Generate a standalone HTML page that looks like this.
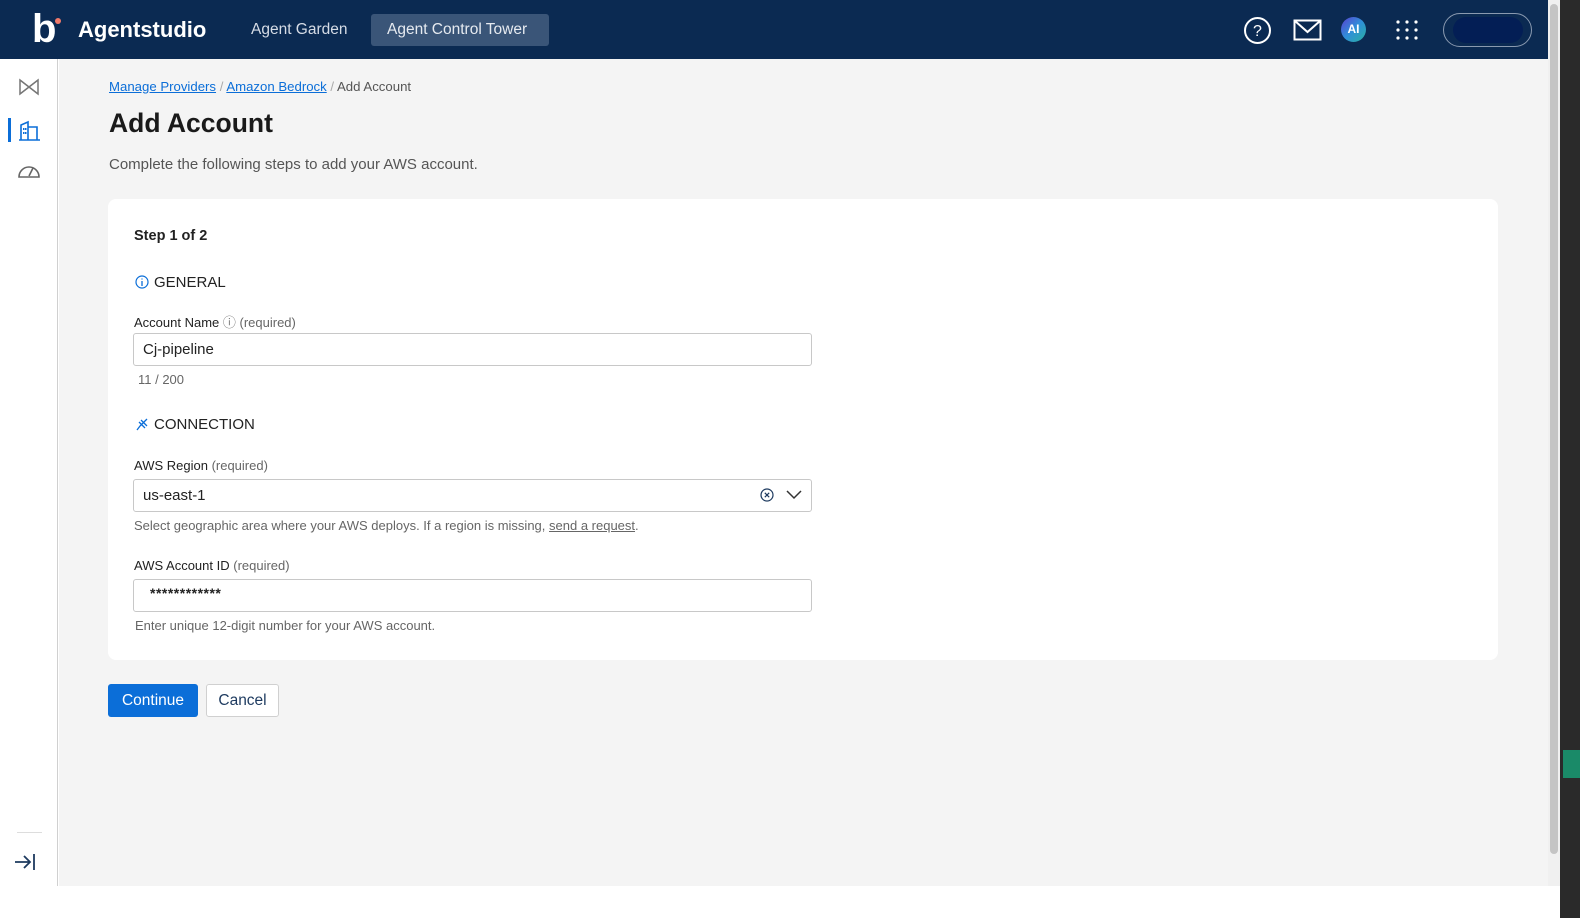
<!DOCTYPE html>
<html><head><meta charset="utf-8"><style>
*{box-sizing:border-box;margin:0;padding:0}
body{width:1580px;height:918px;overflow:hidden;background:#fff;font-family:"Liberation Sans",sans-serif;position:relative}
.hdr{position:absolute;left:0;top:0;width:1548px;height:59px;background:#0b2a52}
.side{position:absolute;left:0;top:59px;width:58px;height:827px;background:#fff;border-right:1px solid #d0d0d0}
.main{position:absolute;left:59px;top:59px;width:1489px;height:827px;background:#f4f4f4}
.sb{position:absolute;left:1548px;top:0;width:12px;height:886px;background:#f0f0f0}
.sb div{position:absolute;left:2px;top:4px;width:8px;height:850px;background:#c4c4c4;border-radius:4px}
.dark{position:absolute;left:1560px;top:0;width:20px;height:918px;background:#2a2a2a}
.t{position:absolute;white-space:nowrap}
.card{position:absolute;left:108px;top:199px;width:1390px;height:461px;background:#fff;border-radius:8px}
.inp{position:absolute;left:133px;width:679px;height:33px;border:1px solid #c8c8c8;border-radius:3px;background:#fff}
.lbl{font-size:13px;color:#222}
.req{color:#666}
.help{font-size:13px;color:#666}
</style></head><body>
<div class="hdr">
 <div class="t" style="left:32px;top:9px;color:#fff;font-size:40px;font-weight:bold;line-height:40px">b</div>
 <div style="position:absolute;left:55px;top:18px;width:6px;height:6px;border-radius:50%;background:#f07a6a"></div>
 <div class="t" style="left:78px;top:17px;color:#fff;font-size:22px;font-weight:bold">Agentstudio</div>
 <div class="t" style="left:251px;top:21px;color:#d6dce6;font-size:15.5px">Agent Garden</div>
 <div style="position:absolute;left:371px;top:14px;width:178px;height:32px;background:#3a5578;border-radius:3px"></div>
 <div class="t" style="left:387px;top:21px;color:#e6eaf0;font-size:15.5px">Agent Control Tower</div>
 <svg style="position:absolute;left:1243px;top:16px" width="29" height="29"><circle cx="14.5" cy="14.5" r="12.5" fill="none" stroke="#fff" stroke-width="2"/><text x="14.5" y="20" fill="#fff" font-size="16" text-anchor="middle" font-family="Liberation Sans">?</text></svg>
 <svg style="position:absolute;left:1293px;top:19px" width="29" height="23"><rect x="1.5" y="1.5" width="26" height="19" fill="none" stroke="#fff" stroke-width="2"/><path d="M2 2 L14.5 13 L27 2" fill="none" stroke="#fff" stroke-width="2"/></svg>
 <div style="position:absolute;left:1341px;top:17px;width:25px;height:25px;border-radius:50%;background:linear-gradient(135deg,#5a3fd0,#2f8fd8,#2ab0a0);color:#fff;font-size:12px;font-weight:bold;text-align:center;line-height:25px">AI</div>
 <svg style="position:absolute;left:1395px;top:19px" width="24" height="22"><g fill="#fff"><circle cx="3" cy="3" r="1.6"/><circle cx="12" cy="3" r="1.6"/><circle cx="21" cy="3" r="1.6"/><circle cx="3" cy="11" r="1.6"/><circle cx="12" cy="11" r="1.6"/><circle cx="21" cy="11" r="1.6"/><circle cx="3" cy="19" r="1.6"/><circle cx="12" cy="19" r="1.6"/><circle cx="21" cy="19" r="1.6"/></g></svg>
 <div style="position:absolute;left:1443px;top:13px;width:89px;height:34px;border:1px solid #8a9ab0;border-radius:17px"><div style="position:absolute;left:9px;top:3px;width:70px;height:26px;background:#031e55;border-radius:13px"></div></div>
</div>
<div class="side">
 <svg style="position:absolute;left:18px;top:19px" width="22" height="18"><path d="M2 2 L2 16 L11 9 Z M20 2 L20 16 L11 9 Z" fill="none" stroke="#777" stroke-width="1.5"/><path d="M2 2 L20 16 M20 2 L2 16" stroke="#777" stroke-width="1.3"/></svg>
 <div style="position:absolute;left:8px;top:59px;width:3px;height:24px;background:#0b6ed8"></div>
 <svg style="position:absolute;left:18px;top:60px" width="24" height="22"><path d="M3 21 V6 L10 3 V21 M10 8 H19 V21 M1 21 H22" fill="none" stroke="#0b6ed8" stroke-width="1.6"/><g fill="#0b6ed8"><rect x="5" y="9" width="1.5" height="2"/><rect x="7" y="9" width="1.5" height="2"/><rect x="5" y="13" width="1.5" height="2"/><rect x="7" y="13" width="1.5" height="2"/></g></svg>
 <svg style="position:absolute;left:17px;top:103px" width="24" height="16"><path d="M2 15 A10 10 0 0 1 22 15 Z" fill="none" stroke="#666" stroke-width="1.6"/><path d="M12 14 L16 6" stroke="#666" stroke-width="1.6"/></svg>
 <div style="position:absolute;left:17px;top:773px;width:25px;height:1px;background:#ddd"></div>
 <svg style="position:absolute;left:14px;top:793px" width="22" height="20"><path d="M1 10 H16 M10 4 L16 10 L10 16 M20 2 V18" fill="none" stroke="#1d3a5f" stroke-width="1.8"/></svg>
</div>
<div class="main"></div>
<div class="sb"><div></div></div>
<div class="dark"><div style="position:absolute;left:3px;top:750px;width:17px;height:28px;background:#1a8a68"></div></div>

<div class="t" style="left:109px;top:79px;font-size:13.2px;color:#555"><span style="color:#0b6ed8;text-decoration:underline">Manage Providers</span> <span style="color:#aaa">/</span> <span style="color:#0b6ed8;text-decoration:underline">Amazon Bedrock</span> <span style="color:#aaa">/</span> Add Account</div>
<div class="t" style="left:109px;top:108px;font-size:26.5px;font-weight:bold;color:#1a1a1a">Add Account</div>
<div class="t" style="left:109px;top:156px;font-size:15px;color:#555">Complete the following steps to add your AWS account.</div>

<div class="card"></div>
<div class="t" style="left:134px;top:228px;font-size:14.5px;font-weight:bold;color:#222">Step 1 of 2</div>
<svg style="position:absolute;left:135px;top:275px" width="14" height="14"><circle cx="7" cy="7" r="6" fill="none" stroke="#0b6ed8" stroke-width="1.2"/><path d="M7 6 V11 M7 3.5 V4.5" stroke="#0b6ed8" stroke-width="1.3"/></svg>
<div class="t" style="left:154px;top:274px;font-size:15px;color:#222">GENERAL</div>
<div class="t lbl" style="left:134px;top:312px">Account Name <span style="color:#777">ⓘ</span> <span class="req">(required)</span></div>
<div class="inp" style="top:333px"></div>
<div class="t" style="left:143px;top:341px;font-size:15px;color:#222">Cj-pipeline</div>
<div class="t help" style="left:138px;top:372px">11 / 200</div>
<svg style="position:absolute;left:134px;top:416px" width="15" height="16"><path d="M3 14 L6 10 M6 10 L9 7 L13 3 M5 6 L11 12 M7 4 L13 10" fill="none" stroke="#0b6ed8" stroke-width="1.3"/></svg>
<div class="t" style="left:154px;top:416px;font-size:15px;color:#222">CONNECTION</div>
<div class="t lbl" style="left:134px;top:458px">AWS Region <span class="req">(required)</span></div>
<div class="inp" style="top:479px"></div>
<div class="t" style="left:143px;top:487px;font-size:15px;color:#222">us-east-1</div>
<svg style="position:absolute;left:760px;top:488px" width="14" height="14"><circle cx="7" cy="7" r="6" fill="none" stroke="#1d3a5f" stroke-width="1.2"/><path d="M4.8 4.8 L9.2 9.2 M9.2 4.8 L4.8 9.2" stroke="#1d3a5f" stroke-width="1.2"/></svg>
<svg style="position:absolute;left:786px;top:490px" width="16" height="10"><path d="M1 1 L8 8 L15 1" fill="none" stroke="#333" stroke-width="1.5"/></svg>
<div class="t help" style="left:134px;top:518px">Select geographic area where your AWS deploys. If a region is missing, <span style="text-decoration:underline">send a request</span>.</div>
<div class="t lbl" style="left:134px;top:558px">AWS Account ID <span class="req">(required)</span></div>
<div class="inp" style="top:579px"></div>
<div class="t" style="left:150px;top:585px;font-size:14px;color:#222;font-weight:bold;letter-spacing:0.5px">************</div>
<div class="t help" style="left:135px;top:618px">Enter unique 12-digit number for your AWS account.</div>

<div style="position:absolute;left:108px;top:684px;width:90px;height:33px;background:#0b6ed8;border-radius:3px;color:#fff;font-size:15.5px;text-align:center;line-height:33px">Continue</div>
<div style="position:absolute;left:206px;top:684px;width:73px;height:33px;background:#fff;border:1px solid #d0d0d0;border-radius:3px;color:#1d3a5f;font-size:15.5px;text-align:center;line-height:31px">Cancel</div>
</body></html>
